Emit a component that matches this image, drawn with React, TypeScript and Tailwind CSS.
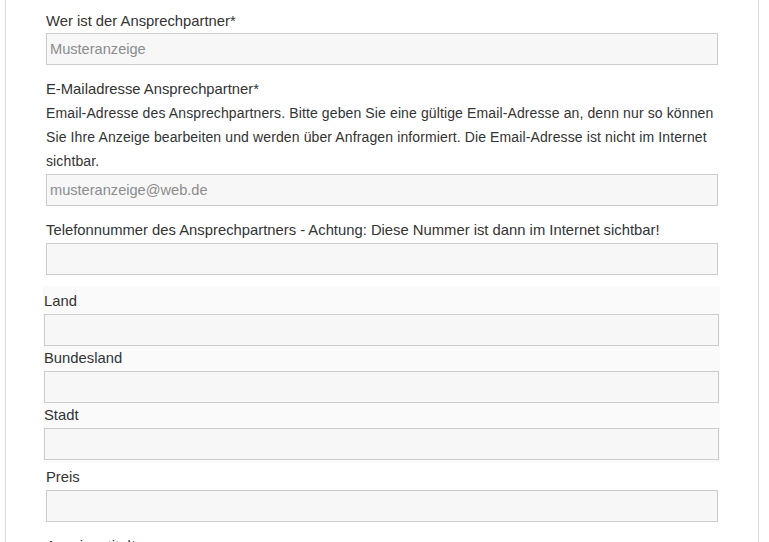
import React from "react";

function Field({ value = "" }: { value?: string }) {
  return (
    <input
      readOnly
      value={value}
      className="block w-full h-[32px] border border-[#cccccc] bg-[#f7f7f7] px-[3px] text-[14.6px] leading-[30px] text-[#8c8c8c] outline-none font-['Liberation_Sans',Arial,sans-serif]"
    />
  );
}

function Label({ children, className = "" }: { children: React.ReactNode; className?: string }) {
  return <div className={`text-[14.8px] leading-[20px] text-[#333333] ${className}`}>{children}</div>;
}

export default function App() {
  return (
    <div className="w-[769px] h-[542px] overflow-hidden bg-white font-['Liberation_Sans',Arial,sans-serif] text-[#333333]">
      <div className="ml-[5px] w-[754px] h-full border-x border-[#dddddd] px-[40px] pt-[11px]">
        <Label className="mb-[2px]">Wer ist der Ansprechpartner*</Label>
        <Field value="Musteranzeige" />

        <Label className="mt-[14px]">E-Mailadresse Ansprechpartner*</Label>
        <p className="mt-[2px] mb-[1px] text-[14px] leading-[24px] tracking-[0.12px] text-[#333333]">
          Email-Adresse des Ansprechpartners. Bitte geben Sie eine gültige Email-Adresse an, denn nur so können Sie Ihre
          Anzeige bearbeiten und werden über Anfragen informiert. Die Email-Adresse ist nicht im Internet sichtbar.
        </p>
        <Field value="musteranzeige@web.de" />

        <Label className="mt-[14px] mb-[3px]">
          Telefonnummer des Ansprechpartners - Achtung: Diese Nummer ist dann im Internet sichtbar!
        </Label>
        <Field />

        <div className="mt-[11px] -ml-[3px] -mr-[2px] bg-[#fafafa] px-[1px] pt-[5px] pb-[3px]">
          <Label className="mb-[3px]">Land</Label>
          <Field />
          <Label className="mt-[2px] mb-[3px]">Bundesland</Label>
          <Field />
          <Label className="mt-[2px] mb-[3px]">Stadt</Label>
          <Field />
        </div>

        <Label className="mt-[4px] mb-[3px]">Preis</Label>
        <Field />

        <Label className="mt-[14px]">Anzeigentitel*</Label>
      </div>
    </div>
  );
}
